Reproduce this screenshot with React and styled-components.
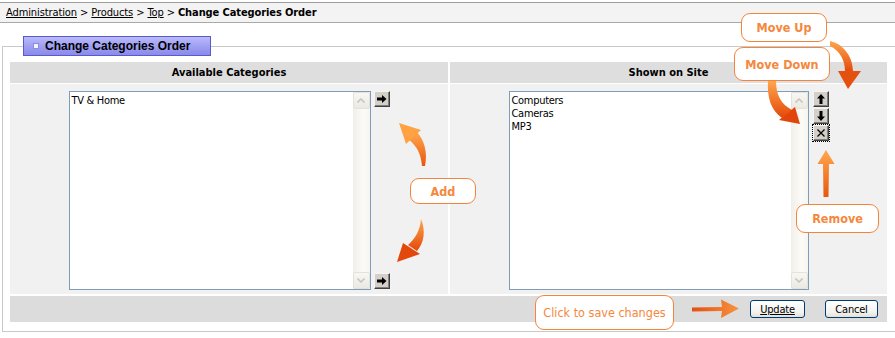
import React from "react";
import styled, { createGlobalStyle } from "styled-components";

const Global = createGlobalStyle`
  html, body { margin: 0; padding: 0; background: #fff; overflow: hidden; }
  body { font-family: "DejaVu Sans Condensed", "DejaVu Sans", sans-serif; font-size: 11px; color: #000; }
`;

const Page = styled.div`
  position: relative;
  width: 895px;
  height: 338px;
  overflow: hidden;
`;

const Breadcrumb = styled.div`
  margin-top: 2px;
  height: 19px;
  border-top: 1px solid #9c9c9c;
  border-bottom: 1px solid #a9a9a9;
  background: #f3f3f3;
  display: flex;
  align-items: center;
  padding-left: 6px;
  font-size: 11px;
  letter-spacing: -0.1px;
  white-space: pre;
`;

const Crumb = styled.a`
  color: #000;
  text-decoration: underline;
`;

const Current = styled.b`
  font-weight: bold;
`;

const Frame = styled.fieldset`
  margin: 13px -30px 0 2px;
  padding: 6px 30px 9px 7px;
  border: 1px solid #c9c9c9;
  min-width: 0;
`;

const Legend = styled.legend`
  margin-left: 13px;
  padding: 0;
  width: 188px;
  height: 20px;
  box-sizing: border-box;
  border: 1px solid #5a5ad0;
  background: linear-gradient(to bottom, #babafb 0%, #a0a0f3 50%, #8a8aea 100%);
`;

const LegendInner = styled.span`
  display: flex;
  align-items: center;
  height: 18px;
  padding-left: 9px;
  gap: 6px;
  font-family: "Liberation Sans", Arial, sans-serif;
  font-weight: bold;
  font-size: 12px;
  color: #000;
`;

const LegendIcon = styled.span`
  width: 4px;
  height: 4px;
  border: 1px solid #8c8ce0;
  background: #f4f4ff;
`;

const Table = styled.div`
  width: 877px;
  display: grid;
  grid-template-columns: 438px 437px;
  grid-template-rows: 21px 210px 27px;
  column-gap: 2px;
  row-gap: 1px;
  background: #fff;
`;

const HeadCell = styled.div`
  background: #dedede;
  display: flex;
  align-items: center;
  justify-content: center;
  font-weight: bold;
  font-size: 11px;
`;

const BodyCell = styled.div`
  background: #f1f1f1;
  display: flex;
  justify-content: center;
  align-items: flex-start;
  padding-top: 7px;
  gap: ${(p) => p.$gap}px;
`;

const Footer = styled.div`
  grid-column: 1 / span 2;
  margin-top: 1px;
  background: #dcdcdc;
  display: flex;
  align-items: center;
  justify-content: flex-end;
  gap: 20px;
  padding-right: 9px;
`;

const ListBox = styled.div`
  width: ${(p) => p.$w}px;
  height: 199px;
  box-sizing: border-box;
  border: 1px solid #7f9db9;
  background: #fff;
  display: flex;
`;

const Items = styled.div`
  flex: 1;
  padding: 2px 2px;
  font-size: 11px;
  letter-spacing: -0.3px;
  line-height: 13px;
`;

const Item = styled.div`
  white-space: nowrap;
`;

const ScrollBar = styled.div`
  width: 17px;
  display: flex;
  flex-direction: column;
  justify-content: space-between;
  background: linear-gradient(to right, #f1efe8, #fbfbf8 60%, #f6f5f0);
`;

const ScrollBtn = styled.div`
  width: 17px;
  height: 17px;
  box-sizing: border-box;
  border: 1px solid #e4e2da;
  border-radius: 2px;
  background: linear-gradient(to bottom, #f8f7f3, #ebe9e2);
  display: flex;
  align-items: center;
  justify-content: center;
`;

const SideButtons = styled.div`
  height: 198px;
  display: flex;
  flex-direction: column;
  justify-content: ${(p) => (p.$spread ? "space-between" : "flex-start")};
  gap: 1px;
`;

const ToolBtn = styled.div`
  width: 16px;
  height: 16px;
  box-sizing: border-box;
  background: #d4d0c8;
  border-top: 1px solid #f4f4f4;
  border-left: 1px solid #f4f4f4;
  border-right: 1px solid #404040;
  border-bottom: 1px solid #404040;
  box-shadow: inset -1px -1px 0 #808080;
  display: flex;
  align-items: center;
  justify-content: center;
  outline: ${(p) => (p.$focus ? "1px dotted #000" : "none")};
  outline-offset: 0px;
`;

const FormButton = styled.div`
  width: ${(p) => p.$w}px;
  height: 18px;
  box-sizing: border-box;
  border: 1px solid #003c74;
  border-radius: 3px;
  background: linear-gradient(to bottom, #ffffff, #f3f2ee 70%, #e3e0d6);
  display: flex;
  align-items: center;
  justify-content: center;
  font-size: 11px;
  letter-spacing: -0.2px;
  text-decoration: ${(p) => (p.$focus ? "underline" : "none")};
`;

const Bubble = styled.div`
  position: absolute;
  left: ${(p) => p.$x}px;
  top: ${(p) => p.$y}px;
  width: ${(p) => p.$w}px;
  height: ${(p) => p.$h}px;
  box-sizing: border-box;
  border: 1.5px solid #f5843a;
  border-radius: 9px;
  background: #fff;
  display: flex;
  align-items: center;
  justify-content: center;
  color: #f5883c;
  font-family: "DejaVu Sans Condensed", "DejaVu Sans", sans-serif;
  font-size: 12.5px;
  font-weight: ${(p) => (p.$bold ? "bold" : "normal")};
  white-space: nowrap;
`;

const Overlay = styled.svg`
  position: absolute;
  left: 0;
  top: 0;
  pointer-events: none;
`;

const Chevron = ({ down }) => (
  <svg width="8" height="5" viewBox="0 0 8 5">
    <path
      d={down ? "M0.5 0.5 L4 4 L7.5 0.5" : "M0.5 4.5 L4 1 L7.5 4.5"}
      fill="none"
      stroke="#c9c6bc"
      strokeWidth="1.6"
    />
  </svg>
);

const RightArrow = () => (
  <svg width="10" height="8" viewBox="0 0 10 8">
    <path d="M0 2.5 H5 V0 L9.5 4 L5 8 V5.5 H0 Z" fill="#000" />
  </svg>
);

const UpArrow = ({ down }) => (
  <svg width="8" height="10" viewBox="0 0 8 10" style={down ? { transform: "rotate(180deg)" } : undefined}>
    <path d="M4 0 L8 4.5 H5.5 V10 H2.5 V4.5 H0 Z" fill="#000" />
  </svg>
);

const Cross = () => (
  <svg width="8" height="8" viewBox="0 0 8 8">
    <path d="M0.5 0.5 L7.5 7.5 M7.5 0.5 L0.5 7.5" stroke="#000" strokeWidth="1.3" />
  </svg>
);

function List({ width, items }) {
  return (
    <ListBox $w={width}>
      <Items>
        {items.map((t) => (
          <Item key={t}>{t}</Item>
        ))}
      </Items>
      <ScrollBar>
        <ScrollBtn>
          <Chevron />
        </ScrollBtn>
        <ScrollBtn>
          <Chevron down />
        </ScrollBtn>
      </ScrollBar>
    </ListBox>
  );
}

function Arrows() {
  return (
    <Overlay width="895" height="338" viewBox="0 0 895 338">
      <defs>
        <linearGradient id="gDown" x1="0" y1="0" x2="0" y2="1">
          <stop offset="0" stopColor="#ffa64d" />
          <stop offset="1" stopColor="#e4480a" />
        </linearGradient>
        <linearGradient id="gUp" x1="0" y1="1" x2="0" y2="0">
          <stop offset="0" stopColor="#e8560f" />
          <stop offset="1" stopColor="#ffa84f" />
        </linearGradient>
        <linearGradient id="gRight" x1="0" y1="0" x2="1" y2="0">
          <stop offset="0" stopColor="#e4500f" />
          <stop offset="1" stopColor="#f8923f" />
        </linearGradient>
      </defs>
      {/* Move Up */}
      <path d="M830,41 C843,44 853,56 853,72 L845,72 C845,60 840,51 830,46 Z" fill="url(#gDown)" />
      <path d="M838,71 L861,71 L848,89 Z" fill="#e4500e" />
      {/* Move Down */}
      <path d="M768,81 L776,81 C776,95 781,104 792,110 L782,118 C771,110 767,98 768,81 Z" fill="url(#gDown)" />
      <path d="M779,120 L795,107 L800,124 Z" fill="#e2450a" />
      {/* Add upper */}
      <path d="M425,166 C428,152 424,140 417,132 L409,140 C417,146 421,154 422,166 Z" fill="url(#gUp)" />
      <path d="M399,123 L406,144 L421,130 Z" fill="#ffa244" />
      {/* Add lower */}
      <path d="M421,219 C426,231 424,243 417,251 L408,245 C416,238 420,230 421,219 Z" fill="url(#gDown)" />
      <path d="M397,262 L403,243 L420,254 Z" fill="#e2470b" />
      {/* Remove */}
      <path d="M826,150 L834.5,164 L829,164 L828.5,197 L823.5,197 L823,164 L817.5,164 Z" fill="url(#gUp)" />
      {/* Save */}
      <path d="M692,307.5 L722,307 L721,299.5 L739,308.5 L721,318 L722,311 L692,311.5 Z" fill="url(#gRight)" />
    </Overlay>
  );
}

export default function App() {
  return (
    <Page>
      <Global />
      <Breadcrumb>
        <Crumb href="#">Administration</Crumb>
        {" > "}
        <Crumb href="#">Products</Crumb>
        {" > "}
        <Crumb href="#">Top</Crumb>
        {" > "}
        <Current>Change Categories Order</Current>
      </Breadcrumb>
      <Frame>
        <Legend>
          <LegendInner>
            <LegendIcon />
            Change Categories Order
          </LegendInner>
        </Legend>
        <Table>
          <HeadCell>Available Categories</HeadCell>
          <HeadCell>Shown on Site</HeadCell>
          <BodyCell $gap={3}>
            <List width={302} items={["TV & Home"]} />
            <SideButtons $spread>
              <ToolBtn>
                <RightArrow />
              </ToolBtn>
              <ToolBtn>
                <RightArrow />
              </ToolBtn>
            </SideButtons>
          </BodyCell>
          <BodyCell $gap={4}>
            <List width={300} items={["Computers", "Cameras", "MP3"]} />
            <SideButtons>
              <ToolBtn>
                <UpArrow />
              </ToolBtn>
              <ToolBtn>
                <UpArrow down />
              </ToolBtn>
              <ToolBtn $focus>
                <Cross />
              </ToolBtn>
            </SideButtons>
          </BodyCell>
          <Footer>
            <FormButton $w={55} $focus>Update</FormButton>
            <FormButton $w={53}>Cancel</FormButton>
          </Footer>
        </Table>
      </Frame>
      <Arrows />
      <Bubble $x={741} $y={13} $w={86} $h={29} $bold>Move Up</Bubble>
      <Bubble $x={734} $y={47} $w={96} $h={34} $bold>Move Down</Bubble>
      <Bubble $x={410} $y={178} $w={66} $h={26} $bold>Add</Bubble>
      <Bubble $x={796} $y={204} $w={83} $h={29} $bold>Remove</Bubble>
      <Bubble $x={535} $y={295} $w={139} $h={35}>Click to save changes</Bubble>
    </Page>
  );
}
